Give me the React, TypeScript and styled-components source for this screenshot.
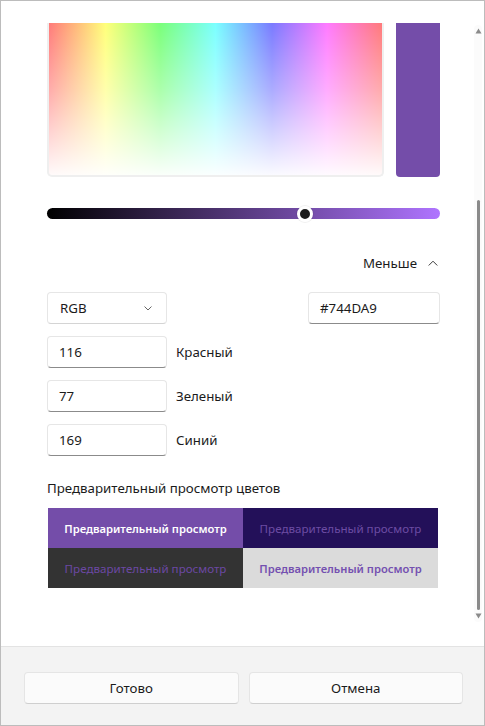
import React from "react";
import styled, { createGlobalStyle } from "styled-components";

const GlobalStyle = createGlobalStyle`
  html, body { margin: 0; padding: 0; background: #fff; }
  body { font-family: "Noto Sans", "Open Sans", sans-serif; color: #1b1b1b; }
  * { box-sizing: border-box; }
`;

const Window = styled.div`
  position: relative;
  width: 485px;
  height: 726px;
  border: 1px solid #bcbcbc;
  background: #fff;
  display: flex;
  flex-direction: column;
  overflow: hidden;
`;

const Body = styled.div`
  flex: 1;
  padding: 22px 44px 0 46px;
  display: flex;
  flex-direction: column;
`;

const SpectrumRow = styled.div`
  display: flex;
  gap: 12px;
  height: 154px;
`;

const Spectrum = styled.div`
  flex: 1;
  border: 2px solid #efefef;
  border-top: none;
  border-radius: 0 0 5px 5px;
  background:
    linear-gradient(to bottom, rgba(255,255,255,0.48) 0%, rgba(255,255,255,0.68) 45%, rgba(255,255,255,0.98) 100%),
    linear-gradient(to right, #ff0000 0%, #ffff00 17%, #00ff00 33.5%, #00ffff 50%, #0000ff 67%, #ff00ff 83.5%, #ff0000 100%);
`;

const Swatch = styled.div<{ $color: string }>`
  width: 44px;
  background: ${(p) => p.$color};
  border-radius: 0 0 4px 4px;
`;

const SliderTrack = styled.div`
  position: relative;
  margin-top: 31px;
  height: 11px;
  border-radius: 6px;
  background: linear-gradient(to right, #000000, #af74ff);
`;

const SliderThumb = styled.div`
  position: absolute;
  top: 50%;
  width: 16px;
  height: 16px;
  margin-left: -8px;
  margin-top: -8px;
  border-radius: 50%;
  background: #1c1c1c;
  border: 3px solid #fff;
  box-shadow: 0 0 0 1px rgba(0,0,0,0.06);
`;

const MoreRow = styled.div`
  margin-top: 28px;
  height: 32px;
  display: flex;
  align-items: center;
  justify-content: flex-end;
  gap: 11px;
  padding-right: 2px;
  font-size: 13.3px;
`;

const FieldRow = styled.div<{ $gap: number }>`
  margin-top: ${(p) => p.$gap}px;
  display: flex;
  align-items: center;
  justify-content: space-between;
`;

const InputLine = styled.div`
  display: flex;
  align-items: center;
  gap: 9px;
`;

const Field = styled.div<{ $width: number }>`
  width: ${(p) => p.$width}px;
  height: 32px;
  border: 1px solid #e6e6e6;
  border-bottom-color: #8b8b8b;
  border-radius: 4px;
  background: #fff;
  display: flex;
  align-items: center;
  padding: 0 11px;
  font-size: 13.3px;
  color: #1b1b1b;
`;

const Select = styled(Field)`
  border-bottom-color: #d4d4d4;
  justify-content: space-between;
  padding: 0 14px 0 12px;
`;

const FieldLabel = styled.span`
  font-size: 13.3px;
  color: #1b1b1b;
`;

const PreviewTitle = styled.div`
  margin-top: 21px;
  line-height: 22px;
  font-size: 13.3px;
`;

const PreviewGrid = styled.div`
  margin-top: 9px;
  margin-left: 1px;
  width: 390px;
  display: grid;
  grid-template-columns: 195px 195px;
  grid-auto-rows: 40px;
`;

const PreviewCell = styled.div<{ $bg: string; $fg: string; $weight: number }>`
  background: ${(p) => p.$bg};
  color: ${(p) => p.$fg};
  font-weight: ${(p) => p.$weight};
  font-size: ${(p) => (p.$weight > 500 ? 11.2 : 11.6)}px;
  display: flex;
  align-items: center;
  justify-content: center;
  white-space: nowrap;
`;

const Footer = styled.div`
  height: 79px;
  flex: none;
  background: #f3f3f3;
  border-top: 1px solid #e3e3e3;
  padding: 25px 21px 0 23px;
  display: flex;
  gap: 10px;
  align-items: flex-start;
`;

const Button = styled.button`
  flex: 1;
  height: 32px;
  border: 1px solid #e5e5e5;
  border-bottom-color: #cfcfcf;
  border-radius: 4px;
  background: #fbfbfb;
  font-family: inherit;
  font-size: 13.3px;
  color: #1b1b1b;
  padding: 0;
`;

const ScrollBar = styled.div`
  position: absolute;
  top: 24px;
  right: 2px;
  width: 8px;
  height: 597px;
  background: #fbfbfb;
  border-radius: 4px;
  display: flex;
  flex-direction: column;
  align-items: center;
`;

const ScrollArrow = styled.svg`
  flex: none;
  margin: 3px 0;
`;

const ScrollSpace = styled.div`
  flex: 1;
  width: 100%;
  display: flex;
  flex-direction: column;
  align-items: center;
  padding-top: 163px;
`;

const ScrollThumb = styled.div`
  flex: 1;
  width: 3px;
  margin-left: 1px;
  border-radius: 2px;
  background: #8a8a8a;
`;

const Chevron = ({ up }: { up?: boolean }) => (
  <svg width="10" height="6" viewBox="0 0 10 6" fill="none">
    <path
      d={up ? "M1 5.2L5 1.2L9 5.2" : "M1 1L5 5L9 1"}
      stroke="#3a3a3a"
      strokeWidth="1"
      strokeLinecap="round"
      strokeLinejoin="round"
    />
  </svg>
);

const color = "#744DA9";

const channels = [
  { value: "116", label: "Красный" },
  { value: "77", label: "Зеленый" },
  { value: "169", label: "Синий" },
];

const previews = [
  { bg: "#744DA9", fg: "#ffffff", weight: 600 },
  { bg: "#231059", fg: "#6c4ca3", weight: 400 },
  { bg: "#333333", fg: "#6b48a3", weight: 400 },
  { bg: "#dbdbdb", fg: "#7450b0", weight: 600 },
];

export default function App() {
  return (
    <>
      <GlobalStyle />
      <Window>
        <Body>
          <SpectrumRow>
            <Spectrum />
            <Swatch $color={color} />
          </SpectrumRow>
          <SliderTrack>
            <SliderThumb style={{ left: `${(257 / 392) * 100}%` }} />
          </SliderTrack>
          <MoreRow>
            <span>Меньше</span>
            <Chevron up />
          </MoreRow>
          <FieldRow $gap={13}>
            <Select $width={120}>
              <span>RGB</span>
              <svg width="8" height="5" viewBox="0 0 8 5" fill="none">
                <path d="M0.8 0.8L4 4L7.2 0.8" stroke="#555" strokeWidth="0.9" strokeLinecap="round" strokeLinejoin="round" />
              </svg>
            </Select>
            <Field $width={132}>#744DA9</Field>
          </FieldRow>
          {channels.map((c) => (
            <FieldRow $gap={12} key={c.label}>
              <InputLine>
                <Field $width={120}>{c.value}</Field>
                <FieldLabel>{c.label}</FieldLabel>
              </InputLine>
            </FieldRow>
          ))}
          <PreviewTitle>Предварительный просмотр цветов</PreviewTitle>
          <PreviewGrid>
            {previews.map((p, i) => (
              <PreviewCell key={i} $bg={p.bg} $fg={p.fg} $weight={p.weight}>
                Предварительный просмотр
              </PreviewCell>
            ))}
          </PreviewGrid>
        </Body>
        <Footer>
          <Button>Готово</Button>
          <Button>Отмена</Button>
        </Footer>
        <ScrollBar>
          <ScrollArrow width="7" height="6" viewBox="0 0 7 6">
            <path d="M0.5 5.5L3.5 0.5L6.5 5.5Z" fill="#8a8a8a" />
          </ScrollArrow>
          <ScrollSpace>
            <ScrollThumb />
          </ScrollSpace>
          <ScrollArrow width="7" height="6" viewBox="0 0 7 6">
            <path d="M0.5 0.5L3.5 5.5L6.5 0.5Z" fill="#8a8a8a" />
          </ScrollArrow>
        </ScrollBar>
      </Window>
    </>
  );
}
